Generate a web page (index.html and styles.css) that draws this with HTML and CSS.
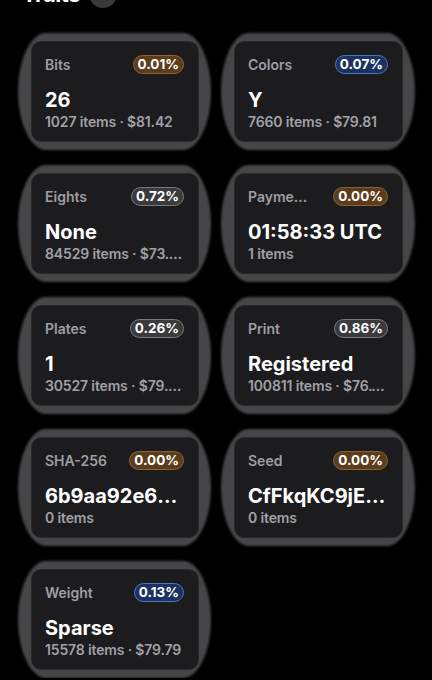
FILE: index.html
```html
<!DOCTYPE html>
<html lang="en">
<head>
<meta charset="utf-8">
<title>Traits</title>
<link rel="stylesheet" href="styles.css">
</head>
<body>
<header class="section-head">
  <h2 class="section-title">Traits</h2>
  <span class="count-badge">9</span>
</header>
<main class="trait-grid">
  <div class="cell"><div class="card">
    <div class="card-top"><span class="label">Bits</span><span class="pct pct-brown">0.01%</span></div>
    <div class="value">26</div>
    <div class="meta">1027 items · $81.42</div>
  </div></div>
  <div class="cell"><div class="card">
    <div class="card-top"><span class="label">Colors</span><span class="pct pct-blue">0.07%</span></div>
    <div class="value">Y</div>
    <div class="meta">7660 items · $79.81</div>
  </div></div>
  <div class="cell"><div class="card">
    <div class="card-top"><span class="label">Eights</span><span class="pct pct-gray">0.72%</span></div>
    <div class="value">None</div>
    <div class="meta">84529 items · $73.368</div>
  </div></div>
  <div class="cell"><div class="card">
    <div class="card-top"><span class="label">Payment Time</span><span class="pct pct-brown">0.00%</span></div>
    <div class="value">01:58:33 UTC</div>
    <div class="meta">1 items</div>
  </div></div>
  <div class="cell"><div class="card">
    <div class="card-top"><span class="label">Plates</span><span class="pct pct-gray">0.26%</span></div>
    <div class="value">1</div>
    <div class="meta">30527 items · $79.542</div>
  </div></div>
  <div class="cell"><div class="card">
    <div class="card-top"><span class="label">Print</span><span class="pct pct-gray">0.86%</span></div>
    <div class="value">Registered</div>
    <div class="meta">100811 items · $76.125</div>
  </div></div>
  <div class="cell"><div class="card">
    <div class="card-top"><span class="label">SHA-256</span><span class="pct pct-brown">0.00%</span></div>
    <div class="value">6b9aa92e6f3c1d84a0b5e7c2</div>
    <div class="meta">0 items</div>
  </div></div>
  <div class="cell"><div class="card">
    <div class="card-top"><span class="label">Seed</span><span class="pct pct-brown">0.00%</span></div>
    <div class="value">CfFkqKC9jE4xT2mWq</div>
    <div class="meta">0 items</div>
  </div></div>
  <div class="cell"><div class="card">
    <div class="card-top"><span class="label">Weight</span><span class="pct pct-blue">0.13%</span></div>
    <div class="value">Sparse</div>
    <div class="meta">15578 items · $79.79</div>
  </div></div>
</main>
</body>
</html>
```
FILE: styles.css
```css
* { box-sizing: border-box; }
html, body {
  margin: 0;
  padding: 0;
  background: #000;
}
body {
  font-family: Inter, "Noto Sans", "Liberation Sans", sans-serif;
  color: #fff;
  overflow: hidden;
}
.section-head {
  display: flex;
  align-items: center;
  gap: 9px;
  height: 32px;
  margin-top: -22px;
  padding-left: 22px;
}
.section-title {
  margin: 0;
  font-size: 22px;
  line-height: 32px;
  font-weight: 700;
  letter-spacing: -0.5px;
}
.count-badge {
  width: 28px;
  height: 28px;
  border-radius: 50%;
  background: #3a3a3c;
  color: #d0d0d4;
  font-size: 14px;
  font-weight: 600;
  display: flex;
  align-items: center;
  justify-content: center;
}
.trait-grid {
  display: grid;
  grid-template-columns: 193px 194px;
  column-gap: 10px;
  row-gap: 15px;
  padding: 0 17px 0 18px;
  margin-top: 23px;
}
.cell {
  position: relative;
  padding: 8px 12px 8px 13px;
}
.cell::before {
  content: "";
  position: absolute;
  inset: 0;
  border-radius: 28px / 50%;
  background: #464648;
  filter: blur(1px);
}
.card {
  position: relative;
  height: 101px;
  background: #1c1c1e;
  border: 1px solid #29292c;
  border-radius: 10px;
  padding: 13px 14px 0 13px;
  display: flex;
  flex-direction: column;
}
.card-top {
  display: flex;
  align-items: center;
  justify-content: space-between;
  gap: 10px;
  height: 19px;
}
.label {
  flex: 0 1 auto;
  min-width: 0;
  max-width: 63px;
  font-size: 14px;
  font-weight: 600;
  color: #9e9ea3;
  white-space: nowrap;
  overflow: hidden;
  text-overflow: ellipsis;
}
.pct {
  flex: 0 0 auto;
  height: 19px;
  padding: 0 4px;
  border-radius: 10px;
  border: 1px solid;
  font-size: 13.5px;
  line-height: 17px;
  font-weight: 700;
  color: #fff;
}
.pct-brown { background: #5b3c1c; border-color: #8c6334; }
.pct-blue { background: #1a3262; border-color: #5074b8; }
.pct-gray { background: #3a3a3c; border-color: #7a7a7e; }
.value {
  margin-top: 14px;
  font-size: 20px;
  line-height: 24px;
  font-weight: 700;
  white-space: nowrap;
  overflow: hidden;
  text-overflow: ellipsis;
}
.meta {
  margin-top: 1px;
  font-size: 14px;
  line-height: 18px;
  font-weight: 600;
  letter-spacing: -0.15px;
  color: #a1a1a6;
  white-space: nowrap;
  overflow: hidden;
  text-overflow: ellipsis;
}
```
